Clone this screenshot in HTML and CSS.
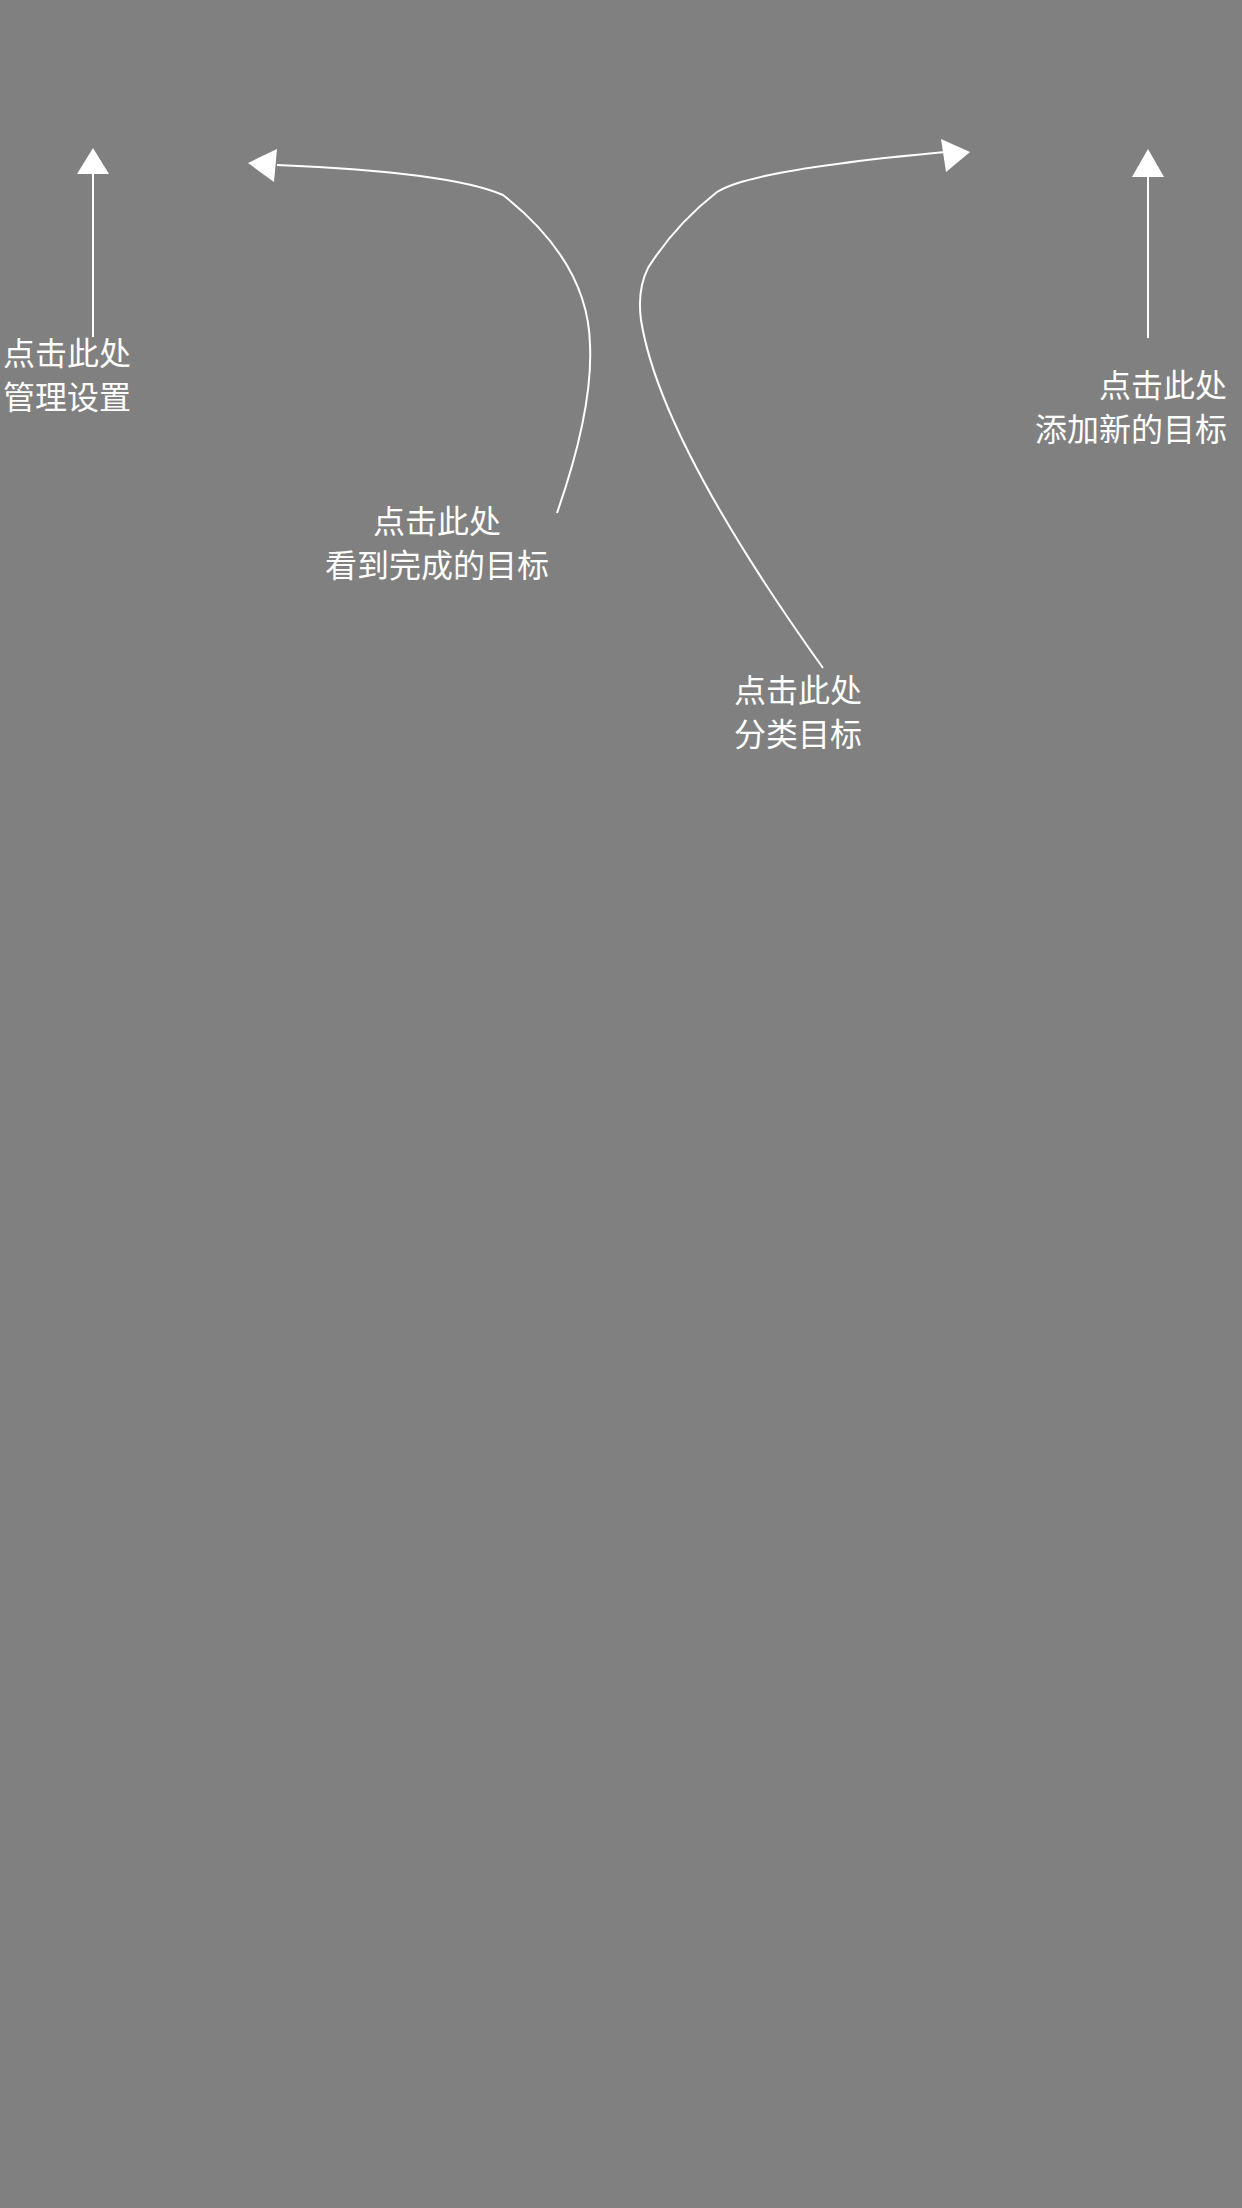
FILE: index.html
```html
<!DOCTYPE html>
<html lang="zh-CN">
<head>
    <meta charset="UTF-8">
    <meta name="viewport" content="width=device-width, initial-scale=1.0">
    <title>使用引导</title>
    <link rel="stylesheet" href="styles.css">
</head>
<body>
    <div class="guide-mask">
        <!-- arrows pointing to the buttons of the page below -->
        <svg class="guide-arrows" width="1242" height="700" viewBox="0 0 1242 700">
            <g fill="none" stroke="#fff" stroke-width="2">
                <line x1="93" y1="172" x2="93" y2="337"/>
                <path d="M557,513 Q593,410 590,345 C589,290 560,240 503,195 Q450,172 277,165"/>
                <path d="M823,668 Q660,440 641,320 Q637,290 648,268 Q675,225 717,192 Q750,170 945,152"/>
                <line x1="1148" y1="175" x2="1148" y2="338"/>
            </g>
            <g fill="#fff">
                <polygon points="93,148 77,174 109,174"/>
                <polygon points="248,163 277,149 274,182"/>
                <polygon points="970,152 941,139 946,172"/>
                <polygon points="1148,149 1132,177 1164,177"/>
            </g>
        </svg>

        <div class="guide-tip tip-settings">点击此处<br>管理设置</div>
        <div class="guide-tip tip-done">点击此处<br>看到完成的目标</div>
        <div class="guide-tip tip-category">点击此处<br>分类目标</div>
        <div class="guide-tip tip-add">点击此处<br>添加新的目标</div>
    </div>
</body>
</html>
```

FILE: styles.css
```css
 body {
     margin: 0;
     font-family: "Noto Sans CJK SC", "Noto Sans", sans-serif;
 }
 .guide-mask {
     position: relative;
     width: 1242px;
     height: 2208px;
     background-color: #808080;
     overflow: hidden;
 }
 .guide-arrows {
     position: absolute;
     top: 0;
     left: 0;
 }
 .guide-tip {
     position: absolute;
     color: white;
     font-size: 32px;
     line-height: 44px;
     white-space: nowrap;
 }
 .tip-settings {
     top: 329px;
     left: 3px;
 }
 .tip-done {
     top: 497px;
     left: 437px;
     transform: translateX(-50%);
     text-align: center;
 }
 .tip-category {
     top: 666px;
     left: 734px;
 }
 .tip-add {
     top: 361px;
     right: 15px;
     text-align: right;
 }
```
